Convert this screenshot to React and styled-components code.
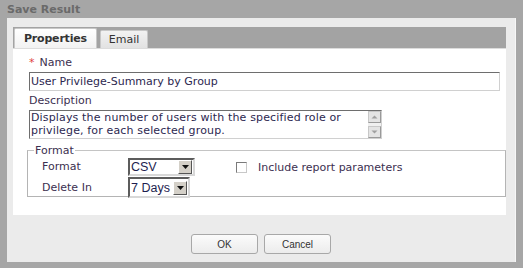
import React from "react";
import styled, { createGlobalStyle } from "styled-components";

const Global = createGlobalStyle`
  html, body { margin: 0; padding: 0; background: #a6a6a6; }
  body { font-family: "DejaVu Sans", Verdana, sans-serif; }
`;

const Dialog = styled.div`
  width: 523px;
  height: 268px;
  background: #a6a6a6;
  display: flex;
  flex-direction: column;
  box-sizing: border-box;
`;

const TitleBar = styled.div`
  height: 18px;
  padding-left: 7px;
  display: flex;
  align-items: center;
  font-size: 11px;
  font-weight: bold;
  color: #6a6a6a;
`;

const Panel = styled.div`
  margin: 0 7px 6px 7px;
  flex: 1;
  background: #ebebeb;
  padding: 9px 9px 0 6px;
  display: flex;
  flex-direction: column;
  border-right: 1px solid #f6f6f6;
`;

const Card = styled.div`
  height: 188px;
  background: #fff;
  display: flex;
  flex-direction: column;
`;

const TabBar = styled.div`
  height: 21px;
  background: #a3a3a3;
  display: flex;
  align-items: flex-end;
  gap: 3px;
  padding-left: 1px;
  border-bottom: 1px solid #dcdcdc;
`;

const Tab = styled.div`
  height: ${(p) => (p.$active ? 20 : 18)}px;
  box-sizing: border-box;
  padding: 0 ${(p) => (p.$active ? 9 : 8)}px;
  display: flex;
  align-items: center;
  font-size: 11px;
  font-weight: ${(p) => (p.$active ? "bold" : "normal")};
  letter-spacing: ${(p) => (p.$active ? "-0.2px" : "0")};
  color: #333;
  background: ${(p) =>
    p.$active ? "linear-gradient(#ffffff, #f2f2f2)" : "linear-gradient(#f2f2f2, #e2e2e2)"};
  border: 1px solid #c8c8c8;
  border-bottom: none;
  border-radius: 2px 2px 0 0;
`;

const Body = styled.div`
  padding: 7px 7px 0 16px;
  display: flex;
  flex-direction: column;
`;

const Label = styled.div`
  font-size: 11px;
  line-height: 14px;
  color: #3c3050;
`;

const Req = styled.span`
  color: #e04040;
  margin-right: 5px;
`;

const TextInput = styled.div`
  margin-top: 2px;
  margin-bottom: 3px;
  width: 471px;
  height: 19px;
  box-sizing: border-box;
  border: 1px solid #d0d0d0;
  border-top-color: #6e6e6e;
  border-left-color: #6e6e6e;
  font-size: 11px;
  line-height: 17px;
  padding-left: 1px;
  color: #2c2850;
`;

const TextArea = styled.div`
  margin-top: 2px;
  width: 353px;
  height: 29px;
  box-sizing: border-box;
  border: 1px solid #d0d0d0;
  border-top-color: #6e6e6e;
  border-left-color: #6e6e6e;
  display: flex;
`;

const AreaText = styled.div`
  flex: 1;
  font-size: 11px;
  line-height: 13px;
  padding-left: 1px;
  color: #2c2850;
  white-space: nowrap;
  letter-spacing: 0.15px;
`;

const ScrollBar = styled.div`
  width: 13px;
  display: flex;
  flex-direction: column;
  justify-content: space-between;
  background: #f0f0f0;
`;

const ScrollBtn = styled.div`
  height: 12px;
  box-sizing: border-box;
  border: 1px solid #c8c8c8;
  border-right-color: #9a9a9a;
  border-bottom-color: #9a9a9a;
  background: #e4e4e4;
  display: flex;
  align-items: center;
  justify-content: center;
`;

const Fieldset = styled.fieldset`
  margin: 5px 0 0 -2px;
  padding: 0 0 0 14px;
  border: 1px solid #b4b4b4;
  border-top-color: #c4c4c4;
  height: 53px;
  box-sizing: border-box;
  width: 479px;
  display: grid;
  grid-template-columns: 86px 107px 1fr;
  grid-template-rows: 20px 21px;
  align-items: center;
`;

const Legend = styled.legend`
  padding: 0 1px;
  margin-left: -8px;
  font-size: 11px;
  line-height: 13px;
  color: #3c3050;
`;

const Select = styled.div`
  width: ${(p) => p.$w}px;
  height: ${(p) => p.$h}px;
  box-sizing: border-box;
  border: 2px solid #5c5c5c;
  border-right-color: #d8d8d8;
  border-bottom-color: #d8d8d8;
  display: flex;
  align-items: center;
  font-family: "Liberation Sans", Arial, sans-serif;
  font-size: 12.5px;
  color: #1e1e50;
  background: #fff;
`;

const SelectText = styled.span`
  flex: 1;
  padding-left: 1px;
`;

const DropBtn = styled.div`
  width: 14px;
  height: 14px;
  margin-right: 1px;
  box-sizing: border-box;
  border: 1px solid #fff;
  border-right-color: #555;
  border-bottom-color: #555;
  background: #d4d0c8;
  display: flex;
  align-items: center;
  justify-content: center;
`;

const Check = styled.label`
  display: flex;
  align-items: center;
  gap: 11px;
  padding-left: 1px;
  font-size: 11px;
  color: #3c3050;
`;

const Box = styled.span`
  width: 11px;
  height: 11px;
  box-sizing: border-box;
  border: 1px solid #7a7a7a;
  border-right-color: #c8c8c8;
  border-bottom-color: #c8c8c8;
  background: #fff;
`;

const Footer = styled.div`
  flex: 1;
  display: flex;
  justify-content: center;
  align-items: flex-start;
  gap: 6px;
  padding-top: 19px;
  padding-left: 3px;
`;

const Button = styled.button`
  width: 67px;
  height: 20px;
  border: 1px solid #a8a8a8;
  border-radius: 3px;
  background: linear-gradient(#fbfbfb, #ececec);
  font-family: "Liberation Sans", Arial, sans-serif;
  font-size: 10px;
  color: #333;
  padding: 0;
`;

const Arrow = ({ up }) => (
  <svg width="7" height="4" viewBox="0 0 7 4">
    <path d={up ? "M0.5 3.5 L3.5 0.5 L6.5 3.5 Z" : "M0.5 0.5 L6.5 0.5 L3.5 3.5 Z"} fill="#a0a0a0" />
  </svg>
);

const DownTri = () => (
  <svg width="7" height="4" viewBox="0 0 7 4">
    <path d="M0 0 L7 0 L3.5 4 Z" fill="#111" />
  </svg>
);

export default function App() {
  return (
    <>
      <Global />
      <Dialog>
        <TitleBar>Save Result</TitleBar>
        <Panel>
          <Card>
            <TabBar>
              <Tab $active>Properties</Tab>
              <Tab>Email</Tab>
            </TabBar>
            <Body>
              <Label>
                <Req>*</Req>Name
              </Label>
              <TextInput>User Privilege-Summary by Group</TextInput>
              <Label>Description</Label>
              <TextArea>
                <AreaText>
                  Displays the number of users with the specified role or
                  <br />
                  privilege, for each selected group.
                </AreaText>
                <ScrollBar>
                  <ScrollBtn>
                    <Arrow up />
                  </ScrollBtn>
                  <ScrollBtn>
                    <Arrow />
                  </ScrollBtn>
                </ScrollBar>
              </TextArea>
              <Fieldset>
                <Legend>Format</Legend>
                <Label>Format</Label>
                <Select $w={67} $h={18}>
                  <SelectText>CSV</SelectText>
                  <DropBtn>
                    <DownTri />
                  </DropBtn>
                </Select>
                <Check>
                  <Box />
                  Include report parameters
                </Check>
                <Label>Delete In</Label>
                <Select $w={62} $h={21}>
                  <SelectText>7 Days</SelectText>
                  <DropBtn>
                    <DownTri />
                  </DropBtn>
                </Select>
                <span />
              </Fieldset>
            </Body>
          </Card>
          <Footer>
            <Button>OK</Button>
            <Button>Cancel</Button>
          </Footer>
        </Panel>
      </Dialog>
    </>
  );
}
